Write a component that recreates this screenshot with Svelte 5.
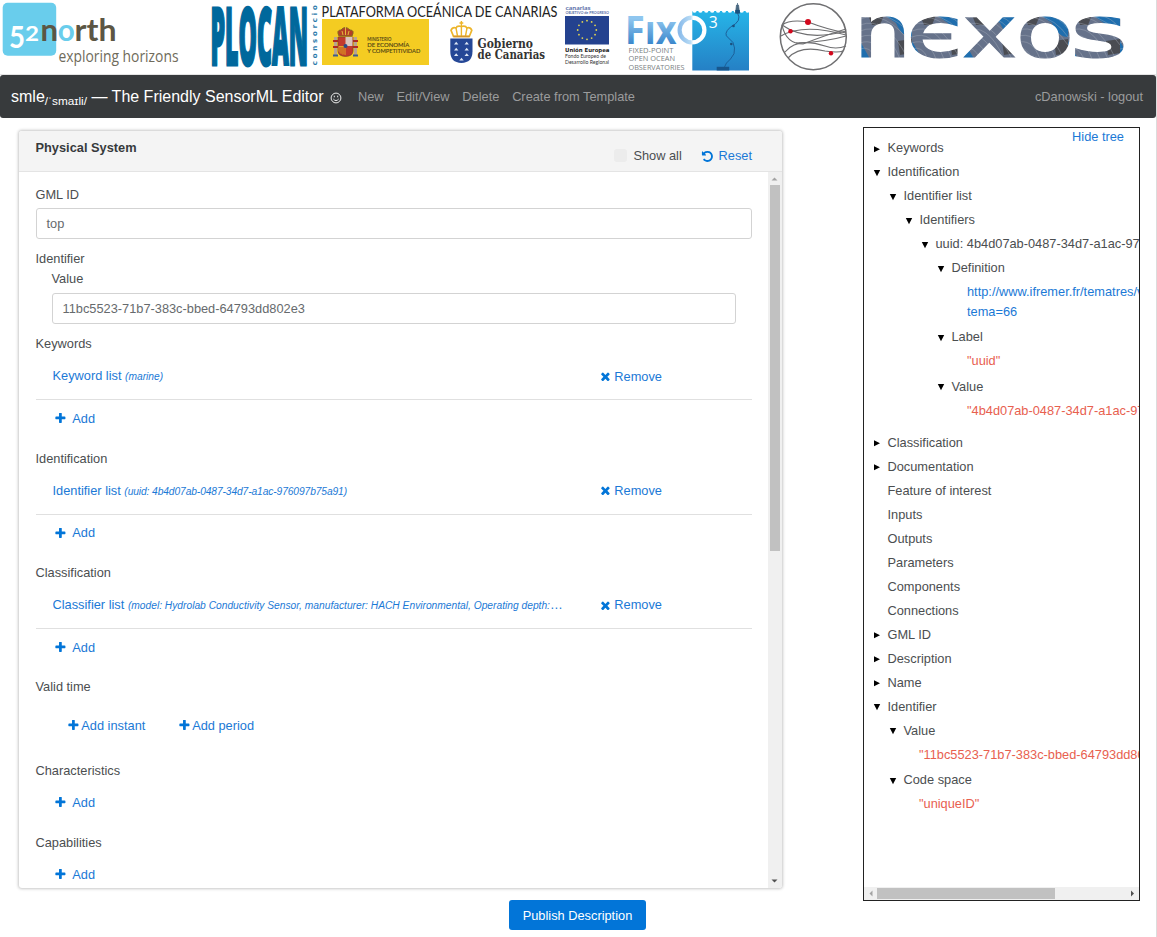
<script>
  const plus = 'M1600 736v192q0 40-28 68t-68 28h-416v416q0 40-28 68t-68 28h-192q-40 0-68-28t-28-68v-416h-416q-40 0-68-28t-28-68v-192q0-40 28-68t68-28h416v-416q0-40 28-68t68-28h192q40 0 68 28t28 68v416h416q40 0 68 28t28 68z';
  const times = 'M1490 1322q0 40-28 68l-136 136q-28 28-68 28t-68-28l-294-294-294 294q-28 28-68 28t-68-28l-136-136q-28-28-28-68t28-68l294-294-294-294q-28-28-28-68t28-68l136-136q28-28 68-28t68 28l294 294 294-294q28-28 68-28t68 28l136 136q28 28 28 68t-28 68l-294 294 294 294q28 28 28 68z';
  const undo = 'M1664 896q0 156-61 298t-164 245-245 164-298 61q-172 0-327-72.5t-264-204.5q-7-10-6.5-22.5t8.5-20.5l137-138q10-9 25-9 16 2 23 12 73 95 179 147t225 52q104 0 198.5-40.5t163.5-109.5 109.5-163.5 40.5-198.5-40.5-198.5-109.5-163.5-163.5-109.5-198.5-40.5q-98 0-188 35.5t-160 101.5l137 138q31 30 14 69-17 40-59 40h-448q-26 0-45-19t-19-45v-448q0-42 40-59 39-17 69 14l130 129q107-101 244.5-156.5t284.5-55.5q156 0 298 61t245 164 164 245 61 298z';

  const lists = [
    { title: 'Keywords', item: 'Keyword list', detail: '(marine)' },
    { title: 'Identification', item: 'Identifier list', detail: '(uuid: 4b4d07ab-0487-34d7-a1ac-976097b75a91)', tight: true },
    { title: 'Classification', item: 'Classifier list', detail: '(model: Hydrolab Conductivity Sensor, manufacturer: HACH Environmental, Operating depth: 200 m)' }
  ];

  const tree = [
    { l: 0, s: 'closed', t: 'Keywords' },
    { l: 0, s: 'open', t: 'Identification' },
    { l: 1, s: 'open', t: 'Identifier list' },
    { l: 2, s: 'open', t: 'Identifiers' },
    { l: 3, s: 'open', t: 'uuid: 4b4d07ab-0487-34d7-a1ac-976097b75a91' },
    { l: 4, s: 'open', t: 'Definition' },
    { l: 5, link: ['http://www.ifremer.fr/tematres/vocab/index.php?', 'tema=66'] },
    { l: 4, s: 'open', t: 'Label' },
    { l: 5, v: '"uuid"' },
    { l: 4, s: 'open', t: 'Value' },
    { l: 5, v: '"4b4d07ab-0487-34d7-a1ac-976097b75a91"', last: true },
    { l: 0, s: 'closed', t: 'Classification' },
    { l: 0, s: 'closed', t: 'Documentation' },
    { l: 0, t: 'Feature of interest' },
    { l: 0, t: 'Inputs' },
    { l: 0, t: 'Outputs' },
    { l: 0, t: 'Parameters' },
    { l: 0, t: 'Components' },
    { l: 0, t: 'Connections' },
    { l: 0, s: 'closed', t: 'GML ID' },
    { l: 0, s: 'closed', t: 'Description' },
    { l: 0, s: 'closed', t: 'Name' },
    { l: 0, s: 'open', t: 'Identifier' },
    { l: 1, s: 'open', t: 'Value' },
    { l: 2, v: '"11bc5523-71b7-383c-bbed-64793dd802e3"' },
    { l: 1, s: 'open', t: 'Code space' },
    { l: 2, v: '"uniqueID"' }
  ];

  const stars = Array.from({ length: 12 }, (_, i) => {
    const a = (i * Math.PI) / 6;
    return { x: 587 + 9.3 * Math.sin(a), y: 30 - 9.3 * Math.cos(a) };
  });
  const scallops = Array.from({ length: 10 }, (_, i) => 694.5 + i * 5.9);
</script>

{#snippet icon(d)}
  <svg class="icon" viewBox="0 0 1792 1792"><path {d} /></svg>
{/snippet}

{#snippet addRow(cls)}
  <div class="add {cls}"><a>{@render icon(plus)}<span>Add</span></a></div>
{/snippet}

<div class="page">
  <header class="logos">
    <svg width="200" height="75" viewBox="0 0 200 75">
      <rect x="2.7" y="2.7" width="53.5" height="53" rx="5" fill="#69cdec" />
      <g font-family="Lato" font-weight="700" font-size="31">
        <text x="9" y="48" fill="#fff" font-size="31" textLength="16" lengthAdjust="spacingAndGlyphs">5</text>
        <text x="25" y="41" fill="#fff" font-size="20" textLength="14" lengthAdjust="spacingAndGlyphs">2</text>
        <text x="40.5" y="41" fill="#5c5644" textLength="17.5" lengthAdjust="spacingAndGlyphs">n</text>
        <text x="57.8" y="41" fill="#69cdec" textLength="17" lengthAdjust="spacingAndGlyphs">o</text>
        <text x="74.5" y="41" fill="#5c5644" textLength="42" lengthAdjust="spacingAndGlyphs">rth</text>
      </g>
      <text x="58.5" y="61.5" font-family="Open Sans" font-size="16" fill="#6f6b5b" textLength="120" lengthAdjust="spacingAndGlyphs">exploring horizons</text>
    </svg>

    <svg width="420" height="75" viewBox="200 0 420 75">
      <g transform="translate(210.500 64.700) scale(.355 1)">
        <text x="0" y="0" font-family="Open Sans" font-weight="800" font-size="80.500" fill="#00689c" stroke="#00689c" stroke-width="3" stroke-linejoin="miter" textLength="275" lengthAdjust="spacingAndGlyphs">PLOCAN</text>
      </g>
      <text transform="translate(316.500 65.200) rotate(-90)" font-family="DejaVu Sans" font-weight="700" font-size="7" fill="#2b7bab" textLength="60">consorcio</text>
      <text x="321.5" y="16.6" font-family="Lato" font-size="15.4" fill="#222" textLength="236" lengthAdjust="spacingAndGlyphs">PLATAFORMA OCEÁNICA DE CANARIAS</text>
      <rect x="322" y="19" width="107" height="46" fill="#f4cc22" />
      <g>
        <rect x="334" y="37" width="3" height="18" fill="#b9a48d" />
        <rect x="354" y="37" width="3" height="18" fill="#b9a48d" />
        <path d="M333 41h5M353 41h5M333 47h5M353 47h5" stroke="#b22b22" stroke-width="2.2" />
        <path d="M333 55.5h5M353 55.5h5" stroke="#3e5d8b" stroke-width="1.8" />
        <path d="M338 37h15v14q0 5-7.500 5.500q-7.500-.5-7.500-5.500z" fill="#c33a2d" stroke="#7c4925" stroke-width=".7" />
        <path d="M345.500 37h7v9h-7z" fill="#dbc5bd" />
        <path d="M338.500 46h7v9q-6-1-7-4z" fill="#e4a629" />
        <path d="M340 47v6M342 47v7M344 47v8" stroke="#b32720" stroke-width=".8" />
        <circle cx="345.500" cy="46" r="2" fill="#2c4c87" />
        <path d="M339 36q-3-6 2-6q4-5 9 0q5 0 2 6z" fill="#b43e28" stroke="#846523" stroke-width="1" />
        <path d="M345.500 27v8M342 31l1 4M349 31l-1 4" stroke="#e4b93b" stroke-width="1" />
      </g>
      <g font-family="Lato" font-size="5.600" fill="#4c4116" stroke="#4c4116" stroke-width=".12">
        <text x="367.300" y="41.300" textLength="24" lengthAdjust="spacingAndGlyphs">MINISTERIO</text>
        <text x="367.300" y="47.300" textLength="42" lengthAdjust="spacingAndGlyphs">DE ECONOMÍA</text>
        <text x="367.300" y="53.300" textLength="53" lengthAdjust="spacingAndGlyphs">Y COMPETITIVIDAD</text>
      </g>
      <path d="M450.300 38.500h22.200v13q0 11-11.100 11.500q-11.100-.5-11.100-11.500z" fill="#254796" />
      <path d="M454 44.500l2.200-2.800 2.200 2.800zM464.500 44.500l2.200-2.800 2.200 2.800zM454 50.500l2.200-2.800 2.200 2.800zM464.500 50.500l2.200-2.800 2.200 2.800zM454 56l2.200-2.800 2.200 2.800zM464.500 56l2.200-2.800 2.200 2.800zM459.300 60.500l2.200-2.800 2.200 2.800z" fill="#dde6f4" />
      <path d="M453.500 36.300l-2.500-6q1.500-3.500 5-2.300q1-2.500 5.400-1.500q4.400-1 5.400 1.500q3.500-1.200 5 2.300l-2.500 6z" fill="#fff" stroke="#edb52b" stroke-width="1.700" />
      <path d="M461.400 21v15M459.500 23h3.800M456 28l1.500 8M467 28l-1.500 8" stroke="#edb52b" stroke-width="1.400" fill="none" />
      <path d="M453.500 36.500h16" stroke="#d6962c" stroke-width="1.600" />
      <g font-family="DejaVu Serif" font-weight="700" font-size="12" fill="#333">
        <text x="477.500" y="48" textLength="55.500" lengthAdjust="spacingAndGlyphs">Gobierno</text>
        <text x="477.500" y="59" textLength="67.500" lengthAdjust="spacingAndGlyphs">de Canarias</text>
      </g>
      <g font-family="Lato" font-weight="700" fill="#5a6ea8">
        <text x="565.500" y="9.800" font-size="5" textLength="25" lengthAdjust="spacingAndGlyphs">canarias</text>
        <text x="565.500" y="13.700" font-size="3.400" textLength="43.500" lengthAdjust="spacingAndGlyphs">OBJETIVO de PROGRESO</text>
      </g>
      <rect x="565" y="16" width="44" height="28.500" fill="#24428f" />
      {#each stars as s}<circle cx={s.x} cy={s.y} r=".9" fill="#e4d651" />{/each}
      <g font-family="Lato" fill="#333">
        <text x="565" y="51.500" font-family="DejaVu Sans" font-weight="700" font-size="5.400" fill="#222" textLength="44.500" lengthAdjust="spacingAndGlyphs">Unión Europea</text>
        <text x="565" y="58" font-size="5.200" textLength="41" lengthAdjust="spacingAndGlyphs">Fondo Europeo de</text>
        <text x="565" y="64.300" font-size="5.200" textLength="44" lengthAdjust="spacingAndGlyphs">Desarrollo Regional</text>
      </g>
    </svg>

    <svg width="140" height="75" viewBox="620 0 140 75">
      <defs>
        <linearGradient id="sea" x2="0" y2="1"><stop stop-color="#26b5e8" /><stop offset="1" stop-color="#2580c5" /></linearGradient>
        <linearGradient id="fix" x2="0" y2="1"><stop offset=".3" stop-color="#8fc6ef" /><stop offset=".8" stop-color="#3985cb" /></linearGradient>
        <linearGradient id="ring"><stop stop-color="#8bbceb" /><stop offset=".45" stop-color="#b9dcf5" /><stop offset=".55" stop-color="#fff" /></linearGradient>
      </defs>
      <rect x="692.300" y="11" width="56.700" height="59.500" fill="url(#sea)" />
      {#each scallops as x}<circle cx={x} cy="10.500" r="2.200" fill="#fff" />{/each}
      <path d="M737.500 13q5 8-7 14q-8 7-2 11q6 4 6 10q1 6-4 11q-5 4-6 8" stroke="#1c609a" stroke-width="1" fill="none" />
      <path d="M737.500 3v8M735.500 13l1-8h2l1 8z" stroke="#476782" fill="#456178" stroke-width=".8" />
      <rect x="735.300" y="10" width="4.500" height="3.500" fill="#17517f" />
      <circle cx="733.500" cy="26" r="1.300" fill="#1b517e" /><circle cx="731.300" cy="44" r="1.300" fill="#1b517e" />
      <rect x="716.700" y="66.800" width="12.500" height="3.700" fill="#17568d" />
      <text x="625" y="44" font-family="Open Sans" font-weight="700" font-size="38.500" fill="url(#fix)" textLength="51.500" lengthAdjust="spacingAndGlyphs">Fıx</text>
      <circle cx="692" cy="30" r="12.400" fill="none" stroke="url(#ring)" stroke-width="4.200" />
      <text x="708.800" y="28" font-family="Open Sans" font-size="16" fill="#fff" textLength="9" lengthAdjust="spacingAndGlyphs">3</text>
      <g font-family="Open Sans" font-size="7.900" fill="#7b7f83">
        <text x="628.500" y="52.700" textLength="45" lengthAdjust="spacingAndGlyphs">FIXED-POINT</text>
        <text x="628.500" y="61.200" textLength="46.500" lengthAdjust="spacingAndGlyphs">OPEN OCEAN</text>
        <text x="628.500" y="69.500" textLength="56" lengthAdjust="spacingAndGlyphs">OBSERVATORIES</text>
      </g>
    </svg>

    <svg width="396" height="75" viewBox="760 0 396 75">
      <defs>
        <pattern id="wave" width="52" height="44" patternUnits="userSpaceOnUse" x="860" y="15">
          <rect width="52" height="44" fill="#66728a" />
          <path d="M24 0L52 0L52 22Q42 22 36 8zM0 26L10 44L0 44z" fill="#1f6eae" />
          <path d="M8 0L24 0L20 10L12 10zM38 26L52 24L52 38L40 40z" fill="#4a4c52" />
          <path d="M0 4Q26-6 52 30M0 10Q26 0 48 44M0 16Q24 6 40 44M0 22Q20 14 32 44M0 28Q16 22 24 44M0 34Q10 30 16 44M20 0Q40 4 52 22M30 0Q44 2 52 14" fill="none" stroke="#a7aebb" stroke-width=".4" />
        </pattern>
      </defs>
      <g fill="none" stroke="#6f6f71" stroke-width="1.200">
        <circle cx="813.300" cy="36.700" r="33" stroke-width="1.500" />
        <path d="M782 25Q790 19 808 22Q826 29 846 33" />
        <path d="M782 25Q806 42 846 31" />
        <path d="M781 36Q803 23 846 35" />
        <path d="M782 25Q786 44 803 44Q826 35 846 29" />
        <path d="M785 52Q797 37 825 46Q836 50 846 46" />
        <path d="M788 58Q800 45 825 51Q838 53 843 51" />
        <path d="M796 43Q826 42 846 36" />
      </g>
      <g fill="#d3081d"><circle cx="808" cy="22" r="3" /><circle cx="790.500" cy="31.300" r="2.200" /><circle cx="831" cy="53.200" r="2.200" /></g>
      <g font-family="DejaVu Sans" font-size="72" fill="url(#wave)" stroke="url(#wave)" stroke-width="1.200">
        <text x="854" y="56.500" textLength="57" lengthAdjust="spacingAndGlyphs">n</text>
        <text x="906" y="56.500" textLength="57" lengthAdjust="spacingAndGlyphs">є</text>
        <text x="962" y="56.500" textLength="55" lengthAdjust="spacingAndGlyphs">x</text>
        <text x="1016" y="56.500" textLength="58" lengthAdjust="spacingAndGlyphs">o</text>
        <text x="1070" y="56.500" textLength="58" lengthAdjust="spacingAndGlyphs">s</text>
      </g>
    </svg>
  </header>

  <nav>
    <div class="brand">smle<sub>/ˈsmaɪli/</sub> — The Friendly SensorML Editor <svg class="smile" viewBox="0 0 12 12"><circle cx="6" cy="6" r="4.900" /><path d="M3.300 7q2.700 3.200 5.400 0M4.300 3.700v1.600M7.700 3.700v1.600" /></svg></div>
    <div class="menu"><a>New</a><a>Edit/View</a><a>Delete</a><a>Create from Template</a></div>
    <a class="user">cDanowski - logout</a>
  </nav>

  <main>
    <div class="editor">
      <section class="card">
        <div class="head">
          <h1>Physical System</h1>
          <label><i></i>Show all</label>
          <a class="reset">{@render icon(undo)}Reset</a>
        </div>
        <div class="body">
          <div class="form">
            <div class="label">GML ID</div>
            <div class="input">top</div>
            <div class="label ident">Identifier</div>
            <div class="inner">
              <div class="label">Value</div>
              <div class="input">11bc5523-71b7-383c-bbed-64793dd802e3</div>
            </div>
            {#each lists as s}
              <div class="label">{s.title}</div>
              <div class="entry">
                <a class="name">{s.item} <em class:tight={s.tight}>{s.detail}</em></a>
                <a class="remove">{@render icon(times)}<span>Remove</span></a>
              </div>
              {@render addRow('after')}
            {/each}
            <div class="label">Valid time</div>
            <div class="time">
              <a>{@render icon(plus)}Add instant</a>
              <a>{@render icon(plus)}Add period</a>
            </div>
            <div class="label">Characteristics</div>
            {@render addRow('alone')}
            <div class="label">Capabilities</div>
            {@render addRow('alone')}
          </div>
          <div class="vbar">
            <svg width="13" height="13"><path d="M3.500 8.500L6.500 5.500L9.500 8.500z" fill="#a3a3a3" /></svg>
            <div class="vthumb"></div>
            <svg width="13" height="13"><path d="M3.500 4.500L6.500 7.500L9.500 4.500z" fill="#505050" /></svg>
          </div>
        </div>
      </section>
      <button>Publish Description</button>
    </div>

    <aside>
      <a class="hide">Hide tree</a>
      <div class="tree">
        {#each tree as n}
          {#if n.t}
            <div class="node" style="padding-left:{n.l * 16 + 7.5}px">
              <svg width="16" height="24">
                {#if n.s === 'open'}<path d="M1.800 10h6.400l-3.200 6.200z" />{:else if n.s === 'closed'}<path d="M2 10.300v6l6-3z" />{/if}
              </svg>{n.t}
            </div>
          {:else}
            <div class="value" class:last={n.last} style="padding-left:{n.l * 16 + 23}px">
              {#if n.link}{#each n.link as part}<a>{part}</a>{/each}{:else}{n.v}{/if}
            </div>
          {/if}
        {/each}
      </div>
      <div class="hbar">
        <svg width="13" height="13"><path d="M8.500 3.500L5.500 6.500L8.500 9.500z" fill="#a3a3a3" /></svg>
        <div class="hthumb"></div>
        <svg width="13" height="13"><path d="M5 3.500L8 6.500L5 9.500z" fill="#505050" /></svg>
      </div>
    </aside>
  </main>
</div>

<style>
  :global(body) { margin: 0; background: #fff; overflow: hidden; }
  * { box-sizing: border-box; }
  .page { width: 1157px; height: 937px; border-right: 1px solid #dcdcdc; font: 12.8px/19.2px "Liberation Sans", Arial, sans-serif; color: #4b4e50; display: flex; flex-direction: column; }
  a { color: #1b79d6; text-decoration: none; }
  .logos { height: 75px; display: flex; border-bottom: 1px solid #e4e4e4; flex: none; }
  .logos svg { flex: none; display: block; }
  .icon { width: 12.800px; height: 12.800px; fill: #0275d8; flex: none; }

  nav { height: 43px; flex: none; background: #373a3c; border-radius: 3px; display: flex; align-items: center; padding: 0 13px 0 11px; white-space: nowrap; }
  .brand { color: #fff; font-size: 16px; width: 347px; }
  .brand sub { font-size: 11.800px; line-height: 0; vertical-align: baseline; position: relative; top: 3px; }
  .smile { width: 12px; height: 12px; fill: none; stroke: #fff; stroke-width: .9; vertical-align: -2px; margin-left: 2px; }
  .menu { display: flex; gap: 12.800px; }
  nav a { color: #9b9c9d; }
  .user { margin-left: auto; }

  main { display: flex; justify-content: space-between; align-items: flex-start; padding: 9px 16px 0 19px; }
  .editor { display: flex; flex-direction: column; width: 763px; padding-top: 4px; }
  .card { height: 757px; border-radius: 3px; box-shadow: 0 0 3px 1px rgba(0,0,0,.22); display: flex; flex-direction: column; overflow: hidden; }
  .head { height: 41px; flex: none; background: #f4f4f4; border-bottom: 1px solid #e4e4e4; display: flex; padding: 7px 30px 0 16.500px; }
  h1 { margin: 0; font-size: 12.800px; line-height: 20px; flex: 1; color: #373a3c; }
  label { display: flex; align-items: center; height: 20px; margin-top: 7.500px; gap: 6px; }
  label i { width: 13px; height: 13px; border-radius: 3px; background: #ececec; }
  .reset { display: flex; align-items: center; height: 20px; margin: 8px 0 0 19px; gap: 5px; }
  .body { flex: 1; min-height: 0; display: flex; }
  .form { flex: 1; padding: 13px 16.500px 0 16.500px; overflow: hidden; }
  .label { height: 19.200px; }
  .input { height: 31px; border: 1px solid #d3d3d3; border-radius: 3px; padding: 0 10px; line-height: 29px; margin-top: 4.300px; color: #666a6d; }
  .label.ident { margin-top: 9.500px; }
  .inner { padding: 0 16px; margin: 1.200px 0 10.500px; }
  .entry { height: 46.800px; border-bottom: 1px solid #e0e0e0; display: flex; align-items: center; padding-left: 17px; }
  .name { width: 513px; overflow: hidden; text-overflow: ellipsis; white-space: nowrap; }
  em { font-size: 10.240px; }
  .tight { letter-spacing: -.1px; }
  .remove { display: flex; align-items: center; margin-left: 33px; }
  .remove span { margin-left: 3px; }
  .add { display: flex; align-items: center; padding-left: 18.500px; }
  .add a { display: flex; align-items: center; gap: 5.500px; }
  .after { height: 36.800px; margin-bottom: 11.500px; }
  .alone { height: 45.200px; margin-bottom: 7.600px; }
  .time { height: 57.600px; margin-bottom: 6.600px; display: flex; align-items: center; padding-left: 31.500px; gap: 32.500px; }
  .time a { display: flex; align-items: center; gap: 1.500px; }
  .vbar { width: 14px; background: #f0f0f0; display: flex; flex-direction: column; }
  .vthumb { width: 10px; height: 366px; margin: 0 auto auto 2px; background: #c1c1c1; }
  button { align-self: flex-start; width: 137px; height: 30px; margin: 12px 0 0 490px; border: 0; border-radius: 3px; background: #0275d8; color: #fff; font: 12.800px "Liberation Sans", sans-serif; padding: 0; }

  aside { position: relative; width: 277px; height: 774px; border: 1px solid #222; display: flex; flex-direction: column; }
  .hide { position: absolute; right: 15px; top: -1px; }
  .tree { flex: 1; padding-top: 8px; overflow: hidden; white-space: nowrap; }
  .node { height: 24px; display: flex; align-items: center; }
  .node svg { flex: none; }
  .value { padding-top: 2.400px; padding-bottom: 4px; color: #e8604f; }
  .value a { display: block; }
  .value.last { margin-bottom: 6.400px; }
  .hbar { height: 13px; background: #f0f0f0; display: flex; align-items: center; flex: none; }
  .hthumb { width: 178px; height: 11px; background: #c1c1c1; margin-right: auto; }
</style>
